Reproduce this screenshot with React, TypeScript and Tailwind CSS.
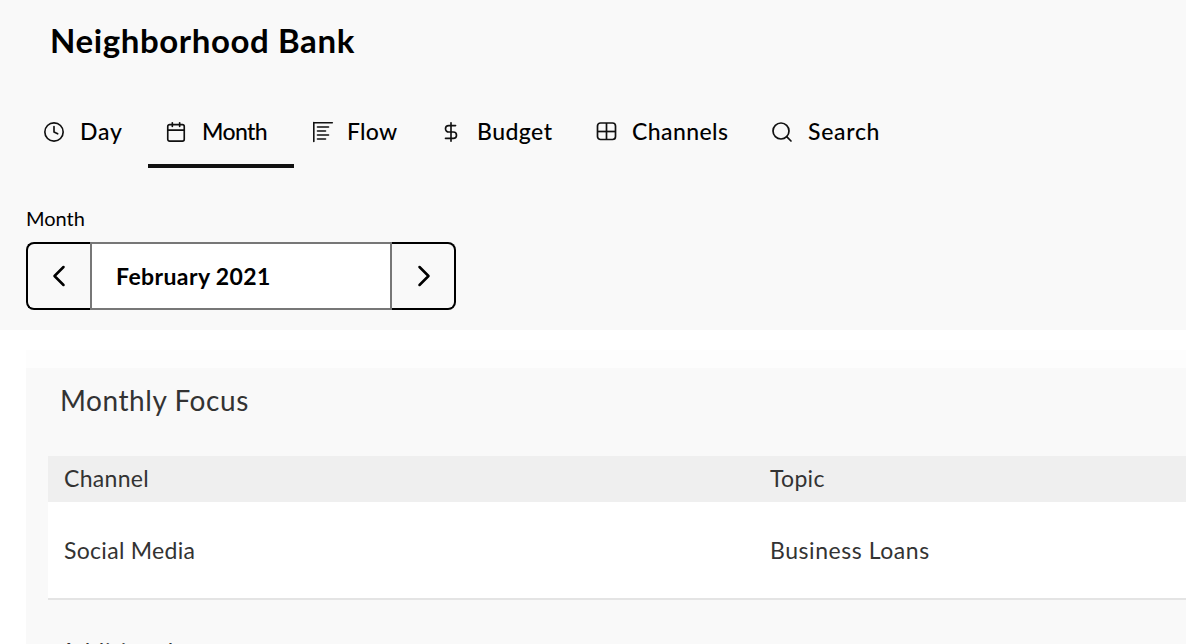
import { ChevronLeft, ChevronRight, Clock, Calendar, DollarSign, Search } from "lucide-react";

const font = "font-['Lato','Noto_Sans',sans-serif]";

function FlowIcon() {
    return (
        <svg width="24" height="24" viewBox="0 0 24 24" fill="none" stroke="currentColor" strokeWidth="1.6" strokeLinecap="round">
            <path d="M2.8 2.5v19" />
            <path d="M2.8 2.8h18.5" />
            <path d="M6.5 7h11" />
            <path d="M6.5 11h8" />
            <path d="M6.5 15h11" />
            <path d="M6.5 19h8" />
        </svg>
    );
}

function ChannelsIcon() {
    return (
        <svg width="24" height="24" viewBox="0 0 24 24" fill="none" stroke="currentColor" strokeWidth="1.7">
            <rect x="2.5" y="3" width="18" height="16.5" rx="3" />
            <path d="M11.5 3v16.5" />
            <path d="M2.5 11.5h18" />
        </svg>
    );
}

const smallIcon = "w-[22px] h-[22px] ml-[1px] mt-[1px]";

const tabs = [
    { label: "Day", icon: <Clock className={smallIcon} strokeWidth={1.8} />, w: "w-[148px]", pl: "pl-[42px]", box: "w-[38px]", track: "tracking-[0.8px]" },
    { label: "Month", icon: <Calendar className={smallIcon} strokeWidth={1.8} />, w: "w-[146px]", pl: "pl-[16px]", box: "w-[38px]", track: "tracking-[-0.6px]", active: true },
    { label: "Flow", icon: <FlowIcon />, w: "w-[130px]", pl: "pl-[17px]", box: "w-[36px]", track: "tracking-[0.25px]" },
    { label: "Budget", icon: <DollarSign className={smallIcon} strokeWidth={1.8} />, w: "w-[154px]", pl: "pl-[15px]", box: "w-[38px]", track: "tracking-[0.45px]" },
    { label: "Channels", icon: <ChannelsIcon />, w: "w-[174px]", pl: "pl-[17px]", box: "w-[37px]", track: "tracking-[0.4px]" },
    { label: "Search", icon: <Search className="w-6 h-6 ml-[1px]" strokeWidth={1.7} />, w: "w-[130px]", pl: "pl-[17px]", box: "w-[39px]", track: "tracking-[0.7px]" },
];

export default function App() {
    return (
        <div className={`h-[644px] overflow-hidden bg-white text-black ${font}`}>
            <div className="h-[330px] bg-[#f9f9f9]">
                <h1 className="pl-[50px] pt-[19px] h-[108px] text-[33px] leading-[42px] font-bold tracking-[0.6px]">Neighborhood Bank</h1>
                <div className="flex h-[60px]">
                    {tabs.map((tab) => (
                        <div key={tab.label} className={`${tab.w} ${tab.pl} relative flex items-start pt-[12px] text-[23px] leading-[28px] font-medium`}>
                            <span className={`${tab.box} text-[#111]`}>{tab.icon}</span>
                            <span className={`-mt-[3px] ${tab.track}`}>{tab.label}</span>
                            {tab.active && <div className="absolute left-0 bottom-0 w-[146px] h-[4px] bg-[#111]" />}
                        </div>
                    ))}
                </div>
                <div className="pl-[26px] pt-[38px]">
                    <div className="text-[20px] leading-[24px] h-[36px]">Month</div>
                    <div className="flex w-[430px] h-[68px]">
                        <button className="w-[64px] flex items-center justify-center border-2 border-black border-r-0 rounded-l-[8px]">
                            <ChevronLeft className="w-9 h-9" strokeWidth={1.7} />
                        </button>
                        <div className="w-[302px] flex items-center pl-[24px] bg-white border-2 border-[#777] text-[23px] font-bold tracking-[0.4px]">February 2021</div>
                        <button className="w-[64px] flex items-center justify-center pl-[2px] border-2 border-black border-l-0 rounded-r-[8px]">
                            <ChevronRight className="w-9 h-9" strokeWidth={1.7} />
                        </button>
                    </div>
                </div>
            </div>
            <div className="ml-[26px] mt-[20px] h-[18px] bg-[#fdfdfd]" />
            <div className="ml-[26px] h-[300px] bg-[#f9f9f9] text-[#333]">
                <h2 className="pl-[34px] h-[88px] pt-[14px] text-[28px] leading-[36px] tracking-[0.55px]">Monthly Focus</h2>
                <div className="ml-[22px] flex h-[46px] items-center pb-[2px] bg-[#efefef] text-[23px] tracking-[0.3px]">
                    <div className="w-[722px] pl-[16px]">Channel</div>
                    <div>Topic</div>
                </div>
                <div className="ml-[22px] flex h-[98px] items-center bg-white border-b-2 border-[#e4e4e4] text-[23px]">
                    <div className="w-[722px] pl-[16px] tracking-[0.3px]">Social Media</div>
                    <div className="tracking-[0.55px]">Business Loans</div>
                </div>
                <div className="pl-[35px] pt-[36px] text-[23px] leading-[30px] tracking-[1px]">Additional</div>
            </div>
        </div>
    );
}
